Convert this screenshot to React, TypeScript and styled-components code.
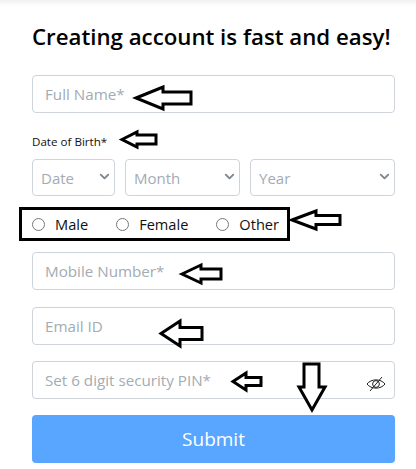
import React from "react";
import styled, { createGlobalStyle } from "styled-components";
import { ChevronDown } from "lucide-react";

const GlobalStyle = createGlobalStyle`
  body {
    margin: 0;
    background: #fff;
    font-family: "Open Sans", "Noto Sans", sans-serif;
  }
`;

type ArrowProps = {
  x: number;
  y: number;
  length: number;
  head: number;
  height: number;
  shaft: number;
};

// hand drawn annotation arrows, pointing left
const LeftArrow = ({ x, y, length, head, height, shaft }: ArrowProps) => {
  const mid = height / 2;
  const points = [
    [0, mid],
    [head, 0],
    [head, mid - shaft / 2],
    [length, mid - shaft / 2],
    [length, mid + shaft / 2],
    [head, mid + shaft / 2],
    [head, height],
  ]
    .map((p) => p.join(","))
    .join(" ");
  return (
    <ArrowSvg $x={x} $y={y} width={length} height={height} viewBox={`0 0 ${length} ${height}`}>
      <polygon points={points} />
    </ArrowSvg>
  );
};

const Field = ({ placeholder, children }: { placeholder: string; children?: React.ReactNode }) => (
  <InputWrap>
    <Input placeholder={placeholder} />
    {children}
  </InputWrap>
);

const DateSelect = ({ label, width, flex }: { label: string; width?: number; flex?: boolean }) => (
  <SelectWrap $width={width} $flex={flex}>
    <Select defaultValue="">
      <option value="" disabled>
        {label}
      </option>
    </Select>
    <Chevron size={15} strokeWidth={3} />
  </SelectWrap>
);

const Radio = ({ label, gap }: { label: string; gap: number }) => (
  <RadioLabel $gap={gap}>
    <RadioInput type="radio" name="gender" />
    {label}
  </RadioLabel>
);

export default function App() {
  return (
    <Page>
      <GlobalStyle />
      <TopShade />
      <Title>Creating account is fast and easy!</Title>
      <Form>
        <Field placeholder="Full Name*" />
        <DobLabel>Date of Birth*</DobLabel>
        <DateRow>
          <DateSelect label="Date" width={83} />
          <DateSelect label="Month" width={115} />
          <DateSelect label="Year" flex />
        </DateRow>
        <GenderBox>
          <Radio label="Male" gap={28} />
          <Radio label="Female" gap={28} />
          <Radio label="Other" gap={0} />
        </GenderBox>
        <Stack>
          <Field placeholder="Mobile Number*" />
          <Field placeholder="Email ID" />
          <Field placeholder="Set 6 digit security PIN*">
            <EyeSlash width={20} height={16} viewBox="0 0 20 16">
              <path d="M1 8 C5 2.5 15 2.5 19 8 C15 13.5 5 13.5 1 8 Z" />
              <circle cx="10" cy="8" r="3.4" />
              <path d="M16 1 L4 15" />
            </EyeSlash>
          </Field>
        </Stack>
        <Submit type="button">Submit</Submit>
      </Form>

      <LeftArrow x={136} y={87} length={55} head={27} height={22} shaft={12} />
      <LeftArrow x={122} y={132} length={34} head={15} height={15} shaft={9} />
      <LeftArrow x={292} y={211} length={48} head={24} height={18} shaft={9} />
      <LeftArrow x={182} y={265} length={39} head={19} height={18} shaft={10} />
      <LeftArrow x={161} y={321} length={41} head={19} height={25} shaft={12} />
      <LeftArrow x={233} y={373} length={28} head={13} height={17} shaft={8} />
      <DownArrow width={26} height={46} viewBox="0 0 26 46">
        <polygon points="5,0 20,0 20,23 26,23 13,46 0,23 5,23" />
      </DownArrow>
    </Page>
  );
}

const Page = styled.div`
  position: relative;
  width: 416px;
  height: 469px;
  box-sizing: border-box;
  padding: 21px 21px 0 32px;
  overflow: hidden;
`;

const TopShade = styled.div`
  position: absolute;
  top: 0;
  left: 0;
  right: 0;
  height: 6px;
  background: linear-gradient(#f1f1f1, #fff);
`;

const Title = styled.h1`
  margin: 0;
  font-size: 22.25px;
  line-height: 32px;
  font-weight: 600;
  color: #000;
  white-space: nowrap;
`;

const Form = styled.form`
  display: flex;
  flex-direction: column;
  margin-top: 22px;
`;

const InputWrap = styled.div`
  position: relative;
  height: 38px;
`;

const Input = styled.input`
  width: 100%;
  height: 100%;
  box-sizing: border-box;
  border: 1px solid #ced4da;
  border-radius: 4px;
  padding: 0 12px;
  font: 400 15.2px "Open Sans", sans-serif;
  color: #495057;
  background: #fff;

  &::placeholder {
    color: #a3abb3;
    opacity: 1;
  }
`;

const EyeSlash = styled.svg`
  position: absolute;
  right: 9px;
  top: 15px;

  path,
  circle {
    fill: none;
    stroke: #222;
    stroke-width: 1;
  }
`;

const DobLabel = styled.label`
  margin-top: 20px;
  font-size: 11.6px;
  line-height: 18px;
  color: #111;
`;

const DateRow = styled.div`
  display: flex;
  gap: 10px;
  margin-top: 8px;
`;

const SelectWrap = styled.div<{ $width?: number; $flex?: boolean }>`
  position: relative;
  height: 37px;
  width: ${(p) => (p.$width ? `${p.$width}px` : "auto")};
  flex: ${(p) => (p.$flex ? 1 : "none")};
`;

const Select = styled.select`
  appearance: none;
  width: 100%;
  height: 100%;
  box-sizing: border-box;
  border: 1px solid #ced4da;
  border-radius: 4px;
  padding: 0 8px;
  font: 400 15px "Open Sans", sans-serif;
  color: #a3abb3;
  background: #fff;
`;

const Chevron = styled(ChevronDown)`
  position: absolute;
  right: 3px;
  top: 10px;
  color: #7b8590;
  pointer-events: none;
`;

const GenderBox = styled.div`
  display: flex;
  align-items: center;
  box-sizing: border-box;
  width: 271px;
  height: 34px;
  margin: 11px 0 0 -13px;
  padding: 0 0 0 10px;
  border: 3px solid #000;
`;

const RadioLabel = styled.label<{ $gap: number }>`
  display: flex;
  align-items: center;
  margin-right: ${(p) => p.$gap}px;
  font-size: 14.6px;
  color: #111;
`;

const RadioInput = styled.input`
  appearance: none;
  width: 13px;
  height: 13px;
  margin: 0 10px 0 0;
  border: 1px solid #777;
  border-radius: 50%;
  background: #fff;
`;

const Stack = styled.div`
  display: flex;
  flex-direction: column;
  gap: 16.5px;
  margin-top: 11px;
`;

const Submit = styled.button`
  height: 48px;
  margin-top: 16px;
  border: 0;
  border-radius: 4px;
  background: #58a6ff;
  color: #fff;
  font: 500 19px "Open Sans", sans-serif;
`;

const ArrowSvg = styled.svg<{ $x: number; $y: number }>`
  position: absolute;
  left: ${(p) => p.$x}px;
  top: ${(p) => p.$y}px;
  overflow: visible;

  polygon {
    fill: #fff;
    stroke: #000;
    stroke-width: 3;
  }
`;

const DownArrow = styled.svg`
  position: absolute;
  left: 299px;
  top: 364px;
  overflow: visible;

  polygon {
    fill: #fff;
    stroke: #000;
    stroke-width: 3;
  }
`;
